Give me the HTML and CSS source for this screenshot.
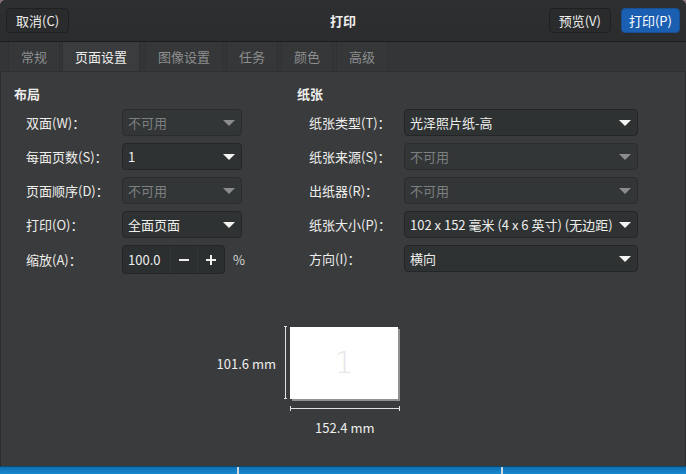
FILE: index.html
```html
<!DOCTYPE html>
<html lang="zh">
<head>
<meta charset="utf-8">
<link rel="stylesheet" href="styles.css">
</head>
<body>
<div class="window">
  <header class="headerbar">
    <button class="btn">取消(C)</button>
    <div class="title">打印</div>
    <div class="hb-right">
      <button class="btn">预览(V)</button>
      <button class="btn btn-blue">打印(P)</button>
    </div>
  </header>
  <nav class="tabs">
    <div class="tab">常规</div>
    <div class="tab active">页面设置</div>
    <div class="tab">图像设置</div>
    <div class="tab">任务</div>
    <div class="tab">颜色</div>
    <div class="tab">高级</div>
  </nav>
  <main class="content">
    <div class="columns">
      <section class="col col-left">
        <h2 class="sec">布局</h2>
        <div class="form">
          <label>双面(W)：</label>
          <div class="combo disabled"><span>不可用</span><i class="arr"></i></div>
          <label>每面页数(S)：</label>
          <div class="combo"><span>1</span><i class="arr"></i></div>
          <label>页面顺序(D)：</label>
          <div class="combo disabled"><span>不可用</span><i class="arr"></i></div>
          <label>打印(O)：</label>
          <div class="combo"><span>全面页面</span><i class="arr"></i></div>
          <label>缩放(A)：</label>
          <div class="spinrow">
            <div class="spin">
              <span class="spin-val">100.0</span>
              <span class="spin-btn">
                <svg width="12" height="12" viewBox="0 0 12 12"><rect x="1" y="5" width="10" height="2" fill="#eeeeec"/></svg>
              </span>
              <span class="spin-btn">
                <svg width="12" height="12" viewBox="0 0 12 12"><rect x="1" y="5" width="10" height="2" fill="#eeeeec"/><rect x="5" y="1" width="2" height="10" fill="#eeeeec"/></svg>
              </span>
            </div>
            <span class="pct">%</span>
          </div>
        </div>
      </section>
      <section class="col col-right">
        <h2 class="sec">纸张</h2>
        <div class="form form-right">
          <label>纸张类型(T)：</label>
          <div class="combo"><span>光泽照片纸-高</span><i class="arr"></i></div>
          <label>纸张来源(S)：</label>
          <div class="combo disabled"><span>不可用</span><i class="arr"></i></div>
          <label>出纸器(R)：</label>
          <div class="combo disabled"><span>不可用</span><i class="arr"></i></div>
          <label>纸张大小(P)：</label>
          <div class="combo"><span>102 x 152 毫米 (4 x 6 英寸) (无边距)</span><i class="arr"></i></div>
          <label>方向(I)：</label>
          <div class="combo"><span>横向</span><i class="arr"></i></div>
        </div>
      </section>
    </div>
    <div class="preview">
      <div class="prev-row">
        <div class="dim-v">101.6 mm</div>
        <div class="vline"></div>
        <div class="page"><span>1</span></div>
      </div>
      <div class="hline"></div>
      <div class="dim-h">152.4 mm</div>
    </div>
  </main>
</div>
<div class="taskbar">
  <div class="task"></div>
  <div class="task"></div>
  <div class="task"></div>
</div>
</body>
</html>
```

FILE: styles.css
```css
html, body {
  margin: 0;
  padding: 0;
}
body {
  width: 686px;
  height: 474px;
  overflow: hidden;
  background: #8a6f7e;
  font-family: "Noto Sans CJK SC", "Noto Sans", sans-serif;
  font-size: 13px;
  color: #eeeeec;
  display: flex;
  flex-direction: column;
}
.window {
  height: 466px;
  display: flex;
  flex-direction: column;
  background: #393b3c;
  border-radius: 6px 6px 0 0;
  overflow: hidden;
  box-shadow: inset 1px 0 0 #2a2c2d, inset -1px 0 0 #2a2c2d;
}
.headerbar {
  height: 41px;
  flex: none;
  display: flex;
  align-items: center;
  padding: 0 6px;
  background: linear-gradient(#2e2f31, #2b2c2e);
  border-bottom: 1px solid #1b1c1d;
  position: relative;
}
.title {
  position: absolute;
  left: 0;
  right: 0;
  text-align: center;
  font-weight: bold;
  pointer-events: none;
  line-height: 41px;
}
.hb-right {
  margin-left: auto;
  display: flex;
  gap: 10px;
  align-items: center;
}
.btn {
  font: inherit;
  color: #eeeeec;
  background: #2a2b2d;
  border: 1px solid #1f2021;
  border-radius: 4px;
  height: 25px;
  padding: 0 9px;
  line-height: 23px;
  position: relative;
  z-index: 1;
}
.btn-blue {
  background: #1b5fb3;
  border-color: #184f93;
  color: #ffffff;
  padding: 0 7px;
}
.tabs {
  height: 29px;
  flex: none;
  display: flex;
  gap: 3px;
  padding: 0 0 0 8px;
  background: #333536;
  border-bottom: 1px solid #2e3031;
}
.tab {
  padding: 0 13px;
  line-height: 29px;
  color: #8c8e8f;
  background: #353738;
  box-shadow: inset -1px 0 0 #2f3132, inset 1px 0 0 #2f3132;
}
.tab.active {
  color: #eeeeec;
  background: #3a3c3d;
  margin-left: -1px;
  margin-right: 2px;
}
.content {
  flex: 1;
  display: flex;
  flex-direction: column;
  padding: 13px 0 0 14px;
}
.columns {
  display: flex;
}
.col-left {
  width: 283px;
}
.sec {
  margin: 0 0 6px;
  font-size: 13px;
  font-weight: bold;
  line-height: 18px;
}
.form {
  display: grid;
  grid-template-columns: 96px 120px;
  row-gap: 7px;
  padding-left: 12px;
  align-items: center;
}
.form-right {
  grid-template-columns: 95px 234px;
}
.form label {
  white-space: nowrap;
}
.combo {
  height: 25px;
  border: 1px solid #232526;
  border-radius: 4px;
  background: #2f3233;
  display: flex;
  align-items: center;
  padding: 0 5px 0 5px;
  justify-content: space-between;
  white-space: nowrap;
}
.combo.disabled {
  color: #7d7f80;
  background: #333637;
  border-color: #2a2c2d;
}
.arr {
  width: 0;
  height: 0;
  border-left: 6px solid transparent;
  border-right: 6px solid transparent;
  border-top: 6px solid #f4f4f2;
  margin-right: 1px;
  flex: none;
}
.combo.disabled .arr {
  border-top-color: #8a8c8d;
}
.spinrow {
  display: flex;
  align-items: center;
  gap: 8px;
  width: 150px;
}
.spin {
  height: 27px;
  display: flex;
  border: 1px solid #232526;
  border-radius: 4px;
  background: #2c2f30;
  overflow: hidden;
}
.spin-val {
  width: 42px;
  padding-left: 5px;
  line-height: 27px;
}
.spin-btn {
  width: 26px;
  display: flex;
  align-items: center;
  justify-content: center;
  border-left: 1px solid #333637;
}
.pct {
  color: #d8d8d6;
}
.preview {
  margin-top: 52px;
  display: flex;
  flex-direction: column;
  align-items: flex-start;
  padding-left: 198px;
}
.prev-row {
  display: flex;
  align-items: center;
}
.dim-v {
  width: 64px;
  text-align: right;
  margin-right: 8px;
  padding-top: 2px;
}
.vline {
  width: 3px;
  height: 73px;
  border-top: 1px solid #e0e0e0;
  border-bottom: 1px solid #e0e0e0;
  background: linear-gradient(#e0e0e0, #e0e0e0) center / 1px 100% no-repeat;
  margin-right: 3px;
  box-sizing: border-box;
}
.page {
  width: 108px;
  height: 72px;
  background: #ffffff;
  box-shadow: 2px 2px 0 #8e9091;
  display: flex;
  align-items: center;
  justify-content: center;
  color: #e6e6e6;
  font-size: 30px;
  font-family: "DejaVu Sans", sans-serif;
  font-weight: 200;
}
.hline {
  margin-top: 7px;
  margin-left: 78px;
  width: 110px;
  height: 5px;
  border-left: 1px solid #e0e0e0;
  border-right: 1px solid #e0e0e0;
  background: linear-gradient(#e0e0e0, #e0e0e0) center / 100% 1px no-repeat;
  box-sizing: border-box;
}
.dim-h {
  margin-top: 7px;
  margin-left: 103px;
}
.taskbar {
  flex: 1;
  display: flex;
  background: linear-gradient(#0d6fb2, #1a8ad0);
  border-top: 1px solid #0a4a78;
}
.task {
  flex: none;
  width: 237px;
  border-right: 2px solid #d0d8de;
  margin-right: 25px;
}
.task:last-child {
  flex: 1;
  width: auto;
  border-right: 0;
  margin-right: 0;
}
```
